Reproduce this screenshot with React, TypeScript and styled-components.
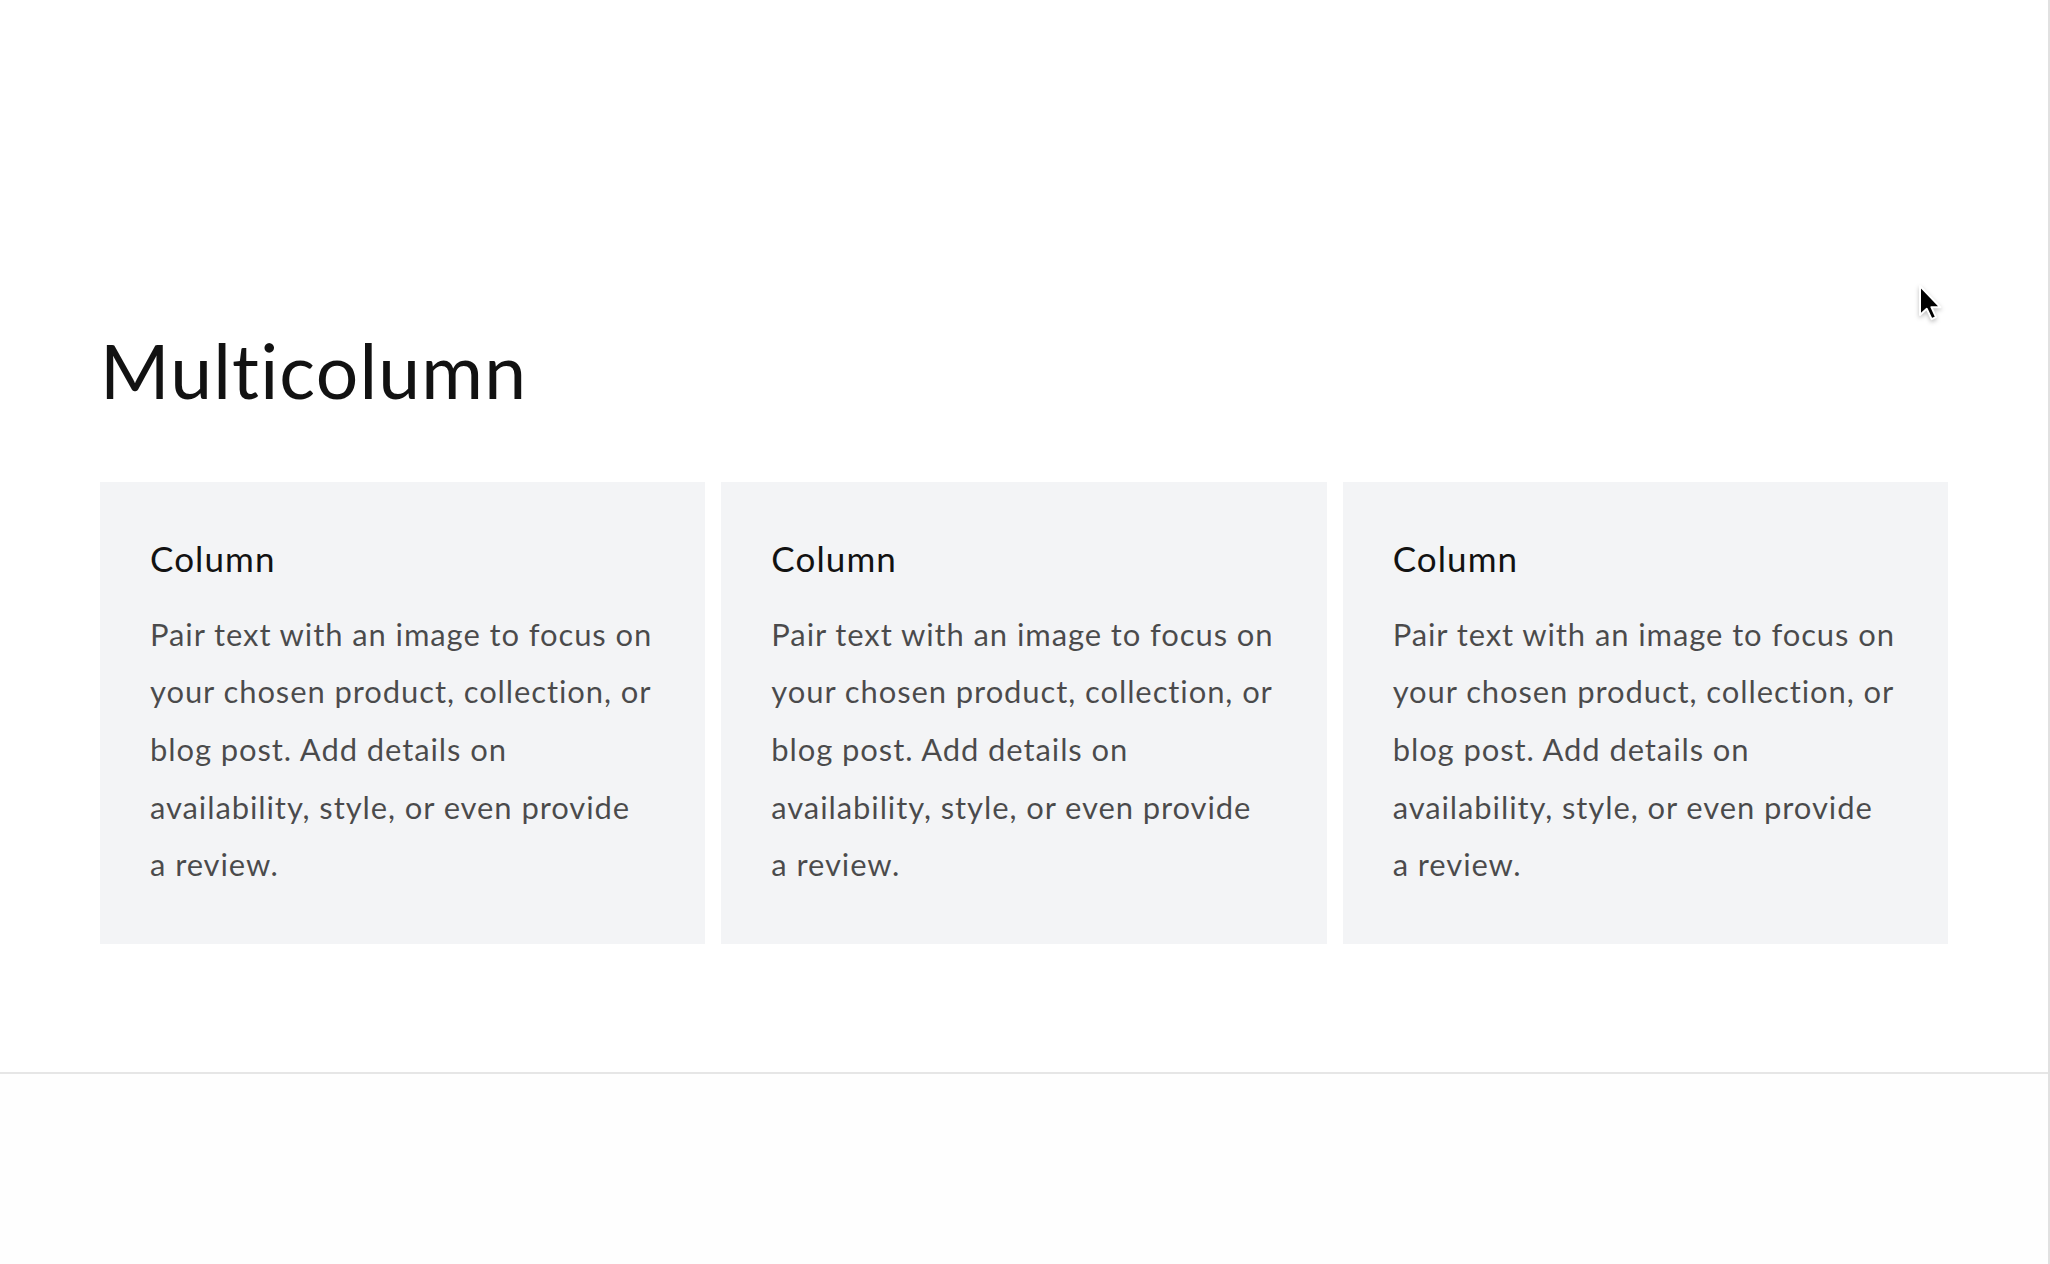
import styled, { createGlobalStyle } from "styled-components";

const GlobalStyle = createGlobalStyle`
  html, body {
    margin: 0;
    padding: 0;
    background: #ffffff;
  }
  body {
    font-family: Lato, "Open Sans", "Liberation Sans", sans-serif;
    -webkit-font-smoothing: antialiased;
  }
`;

const Page = styled.div`
  position: relative;
  display: flex;
  flex-direction: column;
  min-height: 100vh;
  box-sizing: border-box;
  border-right: 2px solid #e1e1e1;
  overflow: hidden;
`;

const Section = styled.section`
  padding: 318px 100px 128px;
`;

const Title = styled.h2`
  margin: 0;
  font-size: 75px;
  line-height: 104px;
  font-weight: 400;
  letter-spacing: 1.2px;
  color: #121212;
`;

const Grid = styled.div`
  display: grid;
  grid-template-columns: repeat(3, minmax(0, 1fr));
  gap: 16px;
  margin-top: 60px;
`;

const Card = styled.div`
  background: #f3f4f6;
  padding: 53px 50px 50px;
  min-width: 0;
`;

const CardTitle = styled.h3`
  margin: 0;
  font-size: 35px;
  line-height: 46.8px;
  font-weight: 400;
  letter-spacing: 1.1px;
  color: #121212;
`;

const CardText = styled.p`
  margin: 24px 0 0;
  font-size: 31px;
  line-height: 57.6px;
  letter-spacing: 0.9px;
  white-space: nowrap;
  color: rgba(18, 18, 18, 0.75);
`;

const Divider = styled.hr`
  margin: 0;
  border: 0;
  border-top: 2px solid #e6e6e6;
`;

const Footer = styled.footer`
  flex: 1;
  background: #fefefe;
`;

const Cursor = styled.svg`
  position: absolute;
  left: 1918px;
  top: 284px;
  filter: drop-shadow(0 2px 2px rgba(0, 0, 0, 0.25));
`;

const lines = [
  "Pair text with an image to focus on",
  "your chosen product, collection, or",
  "blog post. Add details on",
  "availability, style, or even provide",
  "a review.",
];

const columns = ["Column", "Column", "Column"];

export default function App() {
  return (
    <>
      <GlobalStyle />
      <Page>
        <Section>
          <Title>Multicolumn</Title>
          <Grid>
            {columns.map((heading, i) => (
              <Card key={i}>
                <CardTitle>{heading}</CardTitle>
                <CardText>
                  {lines.map((line, j) => (
                    <span key={j}>
                      {line}
                      {j < lines.length - 1 && <br />}
                    </span>
                  ))}
                </CardText>
              </Card>
            ))}
          </Grid>
        </Section>
        <Divider />
        <Footer />
        <Cursor width="26" height="38" viewBox="0 0 13 19">
          <path
            d="M1 1 L1 15.5 L4.4 12.4 L6.8 17.6 L9 16.6 L6.7 11.6 L11.2 11.6 Z"
            fill="#000"
            stroke="#fff"
            strokeWidth="1"
            strokeLinejoin="round"
          />
        </Cursor>
      </Page>
    </>
  );
}
